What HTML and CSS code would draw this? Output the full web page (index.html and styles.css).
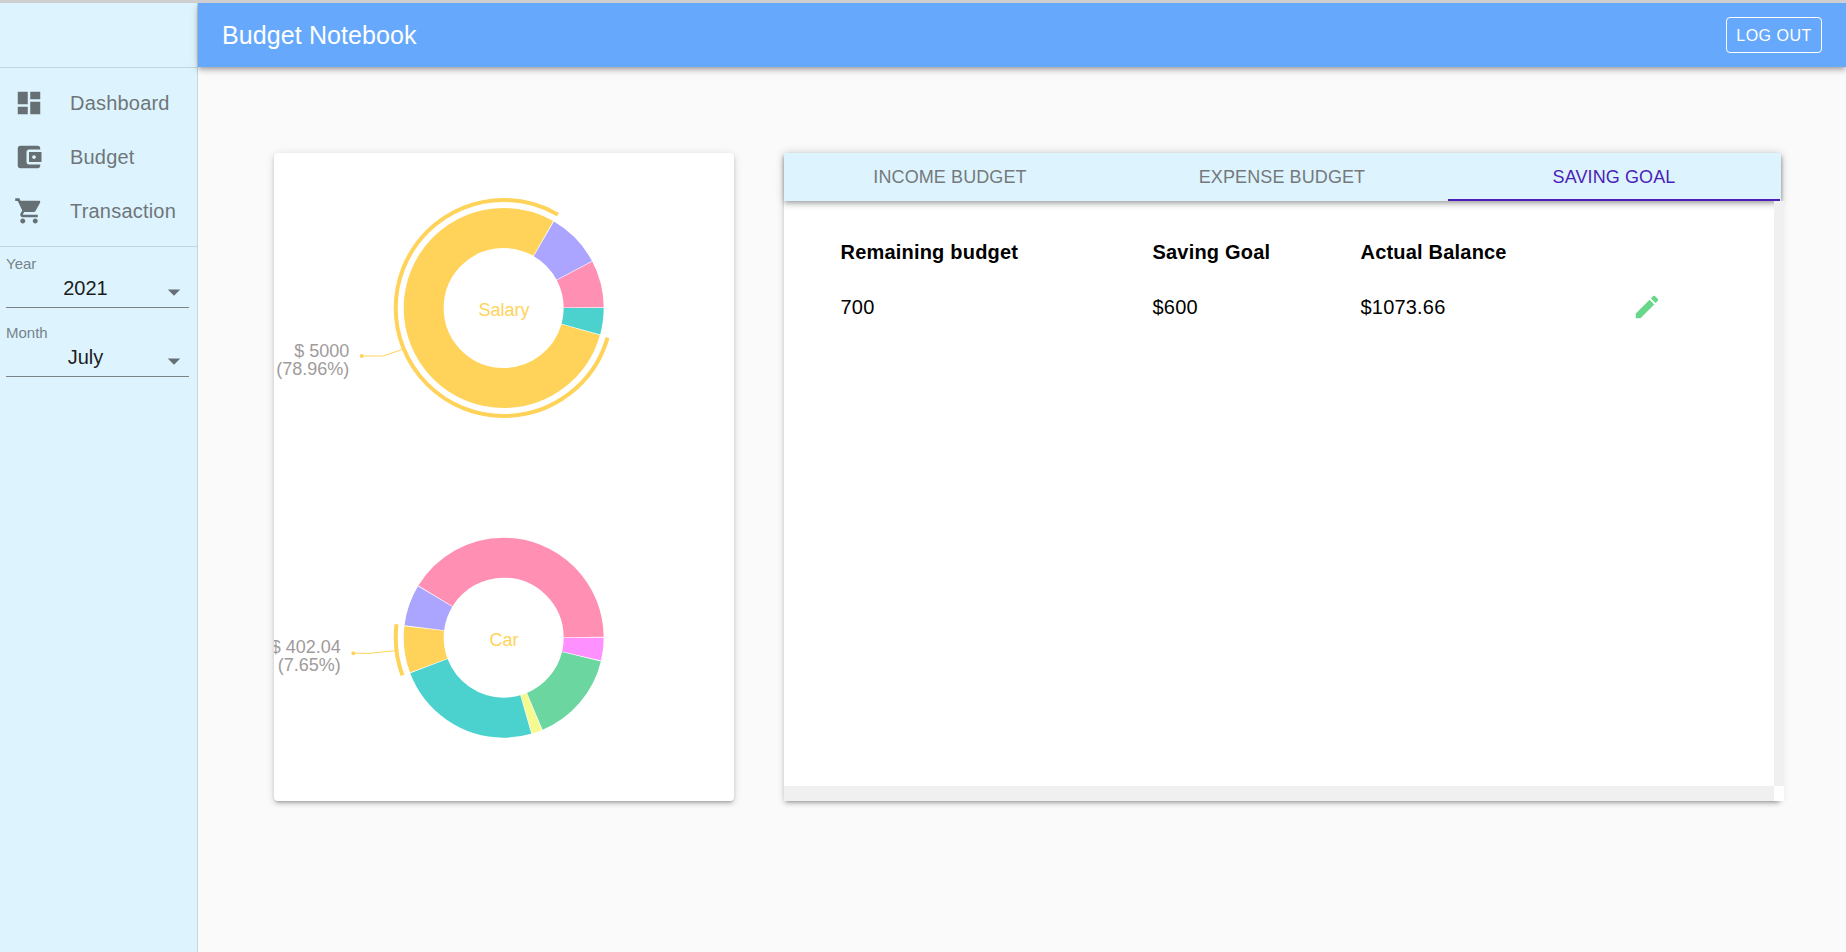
FILE: index.html
```html
<!DOCTYPE html>
<html>

<head>
    <meta charset="utf-8">
    <link rel="stylesheet" href="styles.css">
    <title>Budget Notebook</title>
</head>

<body>
    <div class="app">
        <aside class="sidebar">
            <div class="sidebar-top"></div>
            <ul class="nav">
                <li class="nav-item">
                    <svg class="nav-icon" viewBox="0 0 24 24"><path d="M3 13h8V3H3v10zm0 8h8v-6H3v6zm10 0h8V11h-8v10zm0-18v6h8V3h-8z"/></svg>
                    <span>Dashboard</span>
                </li>
                <li class="nav-item">
                    <svg class="nav-icon" viewBox="0 0 24 24"><path d="M21 18v1c0 1.1-.9 2-2 2H5c-1.11 0-2-.9-2-2V5c0-1.1.89-2 2-2h14c1.1 0 2 .9 2 2v1h-9c-1.11 0-2 .9-2 2v8c0 1.1.89 2 2 2h9zm-9-2h10V8H12v8zm4-2.5c-.83 0-1.5-.67-1.5-1.5s.67-1.5 1.5-1.5 1.5.67 1.5 1.5-.67 1.5-1.5 1.5z"/></svg>
                    <span>Budget</span>
                </li>
                <li class="nav-item">
                    <svg class="nav-icon" viewBox="0 0 24 24"><path d="M7 18c-1.1 0-1.99.9-1.99 2S5.9 22 7 22s2-.9 2-2-.9-2-2-2zM1 2v2h2l3.6 7.59-1.35 2.45c-.16.28-.25.61-.25.96 0 1.1.9 2 2 2h12v-2H7.42c-.14 0-.25-.11-.25-.25l.03-.12.9-1.83h7.45c.75 0 1.41-.41 1.75-1.03l3.58-6.47c.08-.14.12-.31.12-.48 0-.55-.45-1-1-1H5.21l-.94-2H1zm16 16c-1.1 0-1.99.9-1.99 2s.89 2 1.99 2 2-.9 2-2-.9-2-2-2z"/></svg>
                    <span>Transaction</span>
                </li>
            </ul>
            <div class="filters">
                <div class="field">
                    <div class="field-label">Year</div>
                    <div class="field-select">
                        <span class="field-value">2021</span>
                        <svg class="field-arrow" viewBox="0 0 24 24"><path d="M7 10l5 5 5-5z"/></svg>
                    </div>
                </div>
                <div class="field">
                    <div class="field-label">Month</div>
                    <div class="field-select">
                        <span class="field-value">July</span>
                        <svg class="field-arrow" viewBox="0 0 24 24"><path d="M7 10l5 5 5-5z"/></svg>
                    </div>
                </div>
            </div>
        </aside>

        <div class="main">
            <header class="topbar">
                <h1 class="topbar-title">Budget Notebook</h1>
                <button class="logout">LOG OUT</button>
            </header>

            <div class="content">
                <div class="card chart-card">
                    <svg class="charts" width="460" height="648" viewBox="0 0 460 648">
                        <!-- dash = slice angle, offset = start angle, pathLength is 360 -->
                        <g class="donut">
                            <circle cx="229.7" cy="155" r="80" pathLength="360" stroke="#4bd2ce" stroke-dasharray="15.4 344.6" stroke-dashoffset="0"/>
                            <circle cx="229.7" cy="155" r="80" pathLength="360" stroke="#ffd35a" stroke-dasharray="283.8 76.2" stroke-dashoffset="-15.9"/>
                            <circle cx="229.7" cy="155" r="80" pathLength="360" stroke="#aba5ff" stroke-dasharray="31.7 328.3" stroke-dashoffset="-300.2"/>
                            <circle cx="229.7" cy="155" r="80" pathLength="360" stroke="#ff90b3" stroke-dasharray="27.2 332.8" stroke-dashoffset="-332.3"/>
                        </g>
                        <circle class="pull-arc" cx="229.7" cy="155" r="108" pathLength="360" stroke="#ffd35a" stroke-dasharray="284.3 75.7" stroke-dashoffset="-15.9"/>
                        <polyline class="leader" points="128.7,196.3 109.3,203 87.7,203"/>
                        <circle class="leader-dot" cx="87.7" cy="203" r="2"/>
                        <text class="amount" x="75.3" y="204.3">$ 5000</text>
                        <text class="amount" x="75.3" y="222.3">(78.96%)</text>
                        <text class="center-label" x="230" y="163">Salary</text>

                        <g class="donut">
                            <circle cx="229.7" cy="484.7" r="80" pathLength="360" stroke="#ff90ff" stroke-dasharray="13.3 346.7" stroke-dashoffset="0"/>
                            <circle cx="229.7" cy="484.7" r="80" pathLength="360" stroke="#6bd6a0" stroke-dasharray="53.3 306.7" stroke-dashoffset="-13.8"/>
                            <circle cx="229.7" cy="484.7" r="80" pathLength="360" stroke="#f4fa8e" stroke-dasharray="5.8 354.2" stroke-dashoffset="-67.6"/>
                            <circle cx="229.7" cy="484.7" r="80" pathLength="360" stroke="#4bd2ce" stroke-dasharray="85.2 274.8" stroke-dashoffset="-73.9"/>
                            <circle cx="229.7" cy="484.7" r="80" pathLength="360" stroke="#ffd35a" stroke-dasharray="27.1 332.9" stroke-dashoffset="-159.6"/>
                            <circle cx="229.7" cy="484.7" r="80" pathLength="360" stroke="#aba5ff" stroke-dasharray="23.8 336.2" stroke-dashoffset="-187.2"/>
                            <circle cx="229.7" cy="484.7" r="80" pathLength="360" stroke="#ff90b3" stroke-dasharray="148 212" stroke-dashoffset="-211.5"/>
                        </g>
                        <circle class="pull-arc" cx="229.7" cy="484.7" r="108" pathLength="360" stroke="#ffd35a" stroke-dasharray="27.6 332.4" stroke-dashoffset="-159.6"/>
                        <polyline class="leader" points="121,497.7 96,500.3 79.3,500.3"/>
                        <circle class="leader-dot" cx="79.3" cy="500.3" r="2"/>
                        <text class="amount" x="66.7" y="499.5">$ 402.04</text>
                        <text class="amount" x="66.7" y="517.5">(7.65%)</text>
                        <text class="center-label" x="230" y="493">Car</text>
                    </svg>
                </div>

                <div class="card budget-card">
                    <div class="tabs">
                        <div class="tab">INCOME BUDGET</div>
                        <div class="tab">EXPENSE BUDGET</div>
                        <div class="tab tab-active">SAVING GOAL</div>
                    </div>
                    <div class="scroll-area">
                        <div class="scroll-body">
                            <table class="table">
                                <thead>
                                    <tr>
                                        <th>Remaining budget</th>
                                        <th>Saving Goal</th>
                                        <th>Actual Balance</th>
                                        <th></th>
                                    </tr>
                                </thead>
                                <tbody>
                                    <tr>
                                        <td>700</td>
                                        <td>$600</td>
                                        <td>$1073.66</td>
                                        <td>
                                            <svg class="edit-icon" viewBox="0 0 24 24"><path d="M3 17.25V21h3.75L17.81 9.94l-3.75-3.75L3 17.25zM20.71 7.04c.39-.39.39-1.02 0-1.41l-2.34-2.34a.9959.9959 0 0 0-1.41 0l-1.83 1.83 3.75 3.75 1.83-1.83z"/></svg>
                                        </td>
                                    </tr>
                                </tbody>
                            </table>
                        </div>
                        <div class="scroll-v"></div>
                        <div class="scroll-h"></div>
                        <div class="scroll-corner"></div>
                    </div>
                </div>
            </div>
        </div>
    </div>
</body>

</html>
```

FILE: styles.css
```css
* {
    box-sizing: border-box;
}

body {
    margin: 0;
    height: 952px;
    overflow: hidden;
    background: #fafafa;
    border-top: 3px solid #cfcfcf;
    font-family: "Liberation Sans", Arial, sans-serif;
}

.app {
    display: flex;
    height: 949px;
}

/* sidebar */

.sidebar {
    width: 198px;
    flex: none;
    background: #ddf4ff;
    border-right: 1px solid #c3d6e0;
}

.sidebar-top {
    height: 65px;
    border-bottom: 1px solid #c3d6e0;
}

.nav {
    list-style: none;
    margin: 0;
    padding: 8px 0;
    border-bottom: 1px solid #c3d6e0;
}

.nav-item {
    display: flex;
    align-items: center;
    height: 54px;
    padding-left: 14px;
    font-size: 20px;
    letter-spacing: .2px;
    color: #6f7679;
}

.nav-item span {
    margin-left: 26px;
}

.nav-icon {
    width: 30px;
    height: 30px;
    fill: #667074;
}

.filters {
    padding: 9px 8px 0 6px;
}

.field {
    margin-bottom: 17px;
}

.field-label {
    font-size: 15px;
    line-height: 16px;
    color: #78838a;
}

.field-select {
    display: flex;
    align-items: flex-start;
    height: 32px;
    margin-top: 4px;
    padding-left: 6px;
    border-bottom: 1px solid #7d8488;
}

.field-value {
    flex: 1;
    font-size: 20px;
    line-height: 24px;
    text-align: center;
    color: #1c1c1c;
}

.field-arrow {
    width: 30px;
    height: 30px;
    margin-top: 1px;
    fill: #667074;
}

/* top bar */

.main {
    flex: 1;
    min-width: 0;
}

.topbar {
    position: relative;
    z-index: 2;
    display: flex;
    align-items: center;
    justify-content: space-between;
    height: 64px;
    padding: 0 24px;
    background: #66a9fc;
    box-shadow: 0 2px 4px -1px rgba(0, 0, 0, .2), 0 4px 5px 0 rgba(0, 0, 0, .14), 0 1px 10px 0 rgba(0, 0, 0, .12);
}

.topbar-title {
    margin: 0;
    font-size: 25px;
    font-weight: normal;
    letter-spacing: .1px;
    color: #fff;
}

.logout {
    width: 96px;
    height: 36px;
    padding: 1px 0 0;
    font-family: inherit;
    font-size: 16px;
    letter-spacing: .5px;
    color: #fff;
    background: none;
    border: 1px solid #fff;
    border-radius: 4px;
}

/* cards */

.content {
    display: flex;
    gap: 50px;
    padding: 86px 0 0 76px;
}

.card {
    height: 648px;
    background: #fff;
    border-radius: 4px;
    box-shadow: 0 3px 3px -2px rgba(0, 0, 0, .2), 0 3px 4px 0 rgba(0, 0, 0, .14), 0 1px 8px 0 rgba(0, 0, 0, .12);
}

.chart-card {
    width: 460px;
    overflow: hidden;
}

.charts {
    display: block;
}

.donut circle {
    fill: none;
    stroke-width: 40;
}

.pull-arc {
    fill: none;
    stroke-width: 4;
}

.leader {
    fill: none;
    stroke: #ffd35a;
    stroke-width: 1;
}

.leader-dot {
    fill: #ffd35a;
}

.amount {
    font-size: 18px;
    text-anchor: end;
    fill: #a09b9b;
}

.center-label {
    font-size: 18px;
    text-anchor: middle;
    fill: #ffd35a;
}

/* budget panel */

.budget-card {
    display: flex;
    flex-direction: column;
    width: 997px;
    border-radius: 0 0 4px 4px;
}

.tabs {
    position: relative;
    z-index: 1;
    display: flex;
    flex: none;
    height: 48px;
    background: #ddf4ff;
    box-shadow: 0 2px 4px -1px rgba(0, 0, 0, .2), 0 4px 5px 0 rgba(0, 0, 0, .14), 0 1px 10px 0 rgba(0, 0, 0, .12);
}

.tab {
    flex: none;
    width: 332px;
    height: 48px;
    line-height: 48px;
    text-align: center;
    font-size: 18px;
    letter-spacing: .1px;
    color: #75797b;
}

.tab-active {
    color: #4b1fb8;
    border-bottom: 2px solid #4b1fb8;
}

.scroll-area {
    display: grid;
    grid-template-columns: 990px 10px;
    grid-template-rows: 585px 15px;
    width: 1000px;
}

.scroll-body {
    padding: 24px 0 0 56.5px;
}

.scroll-v,
.scroll-h {
    background: #f0f0f0;
}

.scroll-v {
    position: relative;
    z-index: 2;
}

.scroll-corner {
    background: #fff;
}

.table {
    border-collapse: collapse;
    table-layout: fixed;
    width: 800px;
    font-size: 20px;
    line-height: 23px;
    letter-spacing: .2px;
    color: #000;
}

.table th,
.table td {
    padding: 16px 0;
    text-align: left;
}

.table th:nth-child(1) {
    width: 312px;
}

.table th:nth-child(2) {
    width: 208px;
}

.table th:nth-child(3) {
    width: 271.5px;
}

.edit-icon {
    display: block;
    width: 30px;
    height: 30px;
    margin: -4px 0 -3px;
    fill: #68d78a;
}
```
